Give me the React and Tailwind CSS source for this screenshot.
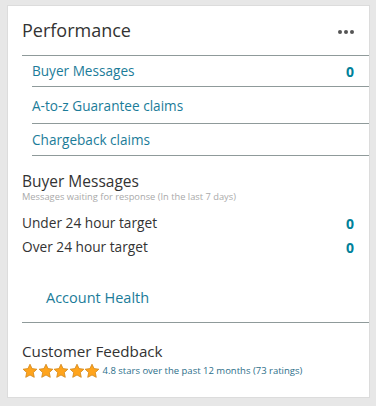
import React from 'react';

const font = { fontFamily: '"Open Sans", "Noto Sans", Arial, sans-serif' };

const Star = () => (
  <svg viewBox="0 0 24 24" className="w-[16px] h-[16px] -mr-[0.5px]">
    <path
      d="M12 1.8l3.1 6.6 7.2.9-5.3 5 1.4 7.2L12 18l-6.4 3.5L7 14.3l-5.3-5 7.2-.9z"
      fill="#ffa41c"
      stroke="#d1861a"
      strokeWidth="1.2"
      strokeLinejoin="round"
    />
  </svg>
);

const LinkRow = ({ label, h }) => (
  <div className={`flex items-center justify-between border-t border-[#8f9a9a] pr-[15px] pt-[2px] ${h}`}>
    <span className="text-[13.6px] text-[#1b7c99]">{label}</span>
  </div>
);

const StatRow = ({ label, value }) => (
  <div className="flex items-center justify-between h-[24px] pr-[15px]">
    <span className="text-[13.7px] text-[#333]">{label}</span>
    <span className="text-[14px] font-bold text-[#00819a]">{value}</span>
  </div>
);

export default function App() {
  return (
    <div className="w-[376px] h-[406px] bg-[#e7e7e7] pt-[5px] pl-[7px]" style={font}>
      <div className="w-[363px] h-[393px] bg-white border border-[#dcdcdc] pl-[14px]">
        <div className="flex items-center justify-between h-[49px] pr-[15px]">
          <h2 className="text-[18px] text-[#333]">Performance</h2>
          <div className="flex gap-[2px] pt-[2px]">
            <span className="w-[4px] h-[4px] rounded-full bg-[#555]" />
            <span className="w-[4px] h-[4px] rounded-full bg-[#555]" />
            <span className="w-[4px] h-[4px] rounded-full bg-[#555]" />
          </div>
        </div>
        <div className="border-t border-[#8f9a9a] pl-[10px]">
          <div className="flex items-center justify-between h-[30px] pr-[15px]">
            <span className="text-[13.6px] text-[#1b7c99]">Buyer Messages</span>
            <span className="text-[14px] font-bold text-[#00819a]">0</span>
          </div>
          <LinkRow label="A-to-z Guarantee claims" h="h-[37px]" />
          <LinkRow label="Chargeback claims" h="h-[32px]" />
          <div className="border-t border-[#8f9a9a]" />
        </div>

        <div className="pt-[15px]">
          <div className="text-[15.5px] text-[#333] leading-[20px]">Buyer Messages</div>
          <div className="text-[9.3px] text-[#aaa] leading-[12px]">Messages waiting for response (In the last 7 days)</div>
          <div className="mt-[8px]">
            <StatRow label="Under 24 hour target" value="0" />
            <StatRow label="Over 24 hour target" value="0" />
          </div>
        </div>

        <div className="h-[63px] flex items-end pb-[13px] pl-[24px]">
          <span className="text-[14.5px] text-[#1b7c99]">Account Health</span>
        </div>
        <div className="border-t border-[#8f9a9a]" />

        <div className="pt-[18px]">
          <div className="text-[15.2px] text-[#333] leading-[20px]">Customer Feedback</div>
          <div className="flex items-center mt-[2px]">
            <div className="flex">
              <Star />
              <Star />
              <Star />
              <Star />
              <Star />
            </div>
            <span className="text-[9.5px] text-[#2d6f8a] ml-[3px]">4.8 stars over the past 12 months (73 ratings)</span>
          </div>
        </div>
      </div>
    </div>
  );
}
